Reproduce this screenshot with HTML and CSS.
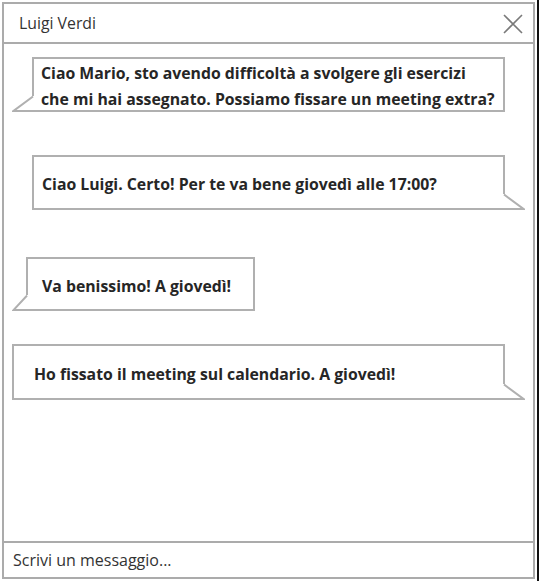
FILE: index.html
```html
<!DOCTYPE html>
<html lang="it">
<head>
<meta charset="utf-8">
<title>Chat - Luigi Verdi</title>
<link rel="stylesheet" href="styles.css">
</head>
<body>
<div class="app">
  <header class="header">
    <span class="title">Luigi Verdi</span>
    <svg class="close" width="20" height="20" viewBox="0 0 20 20" aria-label="Chiudi">
      <path d="M1 1 L19 19 M19 1 L1 19" stroke="#7a7a7a" stroke-width="1.6" fill="none"/>
    </svg>
  </header>
  <main class="chat">
    <div class="bubble b1">
      <p>Ciao Mario, sto avendo difficoltà a svolgere gli esercizi<br>che mi hai assegnato. Possiamo fissare un meeting extra?</p>
      <svg class="tail tail-left" width="22" height="16" viewBox="0 0 22 16"><polygon points="19,0 22,0 22,16 0,16" fill="#fff"/><polyline points="21,0.5 1.5,15 22,15" fill="none" stroke="#b0b0b0" stroke-width="2"/></svg>
    </div>
    <div class="bubble b2">
      <p>Ciao Luigi. Certo! Per te va bene giovedì alle 17:00?</p>
      <svg class="tail tail-right" width="22" height="16" viewBox="0 0 22 16"><polygon points="3,0 0,0 0,16 22,16" fill="#fff"/><polyline points="1,0.5 20.5,15 0,15" fill="none" stroke="#b0b0b0" stroke-width="2"/></svg>
    </div>
    <div class="bubble b3">
      <p>Va benissimo! A giovedì!</p>
      <svg class="tail tail-left tail-sm" width="16" height="16" viewBox="0 0 16 16"><polygon points="13,0 16,0 16,16 0,16" fill="#fff"/><polyline points="15,0.5 1.5,15 16,15" fill="none" stroke="#b0b0b0" stroke-width="2"/></svg>
    </div>
    <div class="bubble b4">
      <p>Ho fissato il meeting sul calendario. A giovedì!</p>
      <svg class="tail tail-right" width="22" height="16" viewBox="0 0 22 16"><polygon points="3,0 0,0 0,16 22,16" fill="#fff"/><polyline points="1,0.5 20.5,15 0,15" fill="none" stroke="#b0b0b0" stroke-width="2"/></svg>
    </div>
  </main>
  <footer class="composer">
    <span class="placeholder">Scrivi un messaggio...</span>
  </footer>
</div>
</body>
</html>
```

FILE: styles.css
```css
* { box-sizing: border-box; }
html { background: #fff; }
body {
  margin: 0;
  width: 539px;
  height: 581px;
  border-right: 2px solid #111;
  background: #fff;
  padding: 2px 0 0 2px;
  font-family: "Open Sans", "Noto Sans", sans-serif;
  color: #2b2b2b;
}
.app {
  width: 533px;
  height: 577px;
  border: 2px solid #ababab;
  display: flex;
  flex-direction: column;
}
.header {
  height: 40px;
  border-bottom: 2px solid #ababab;
  display: flex;
  align-items: center;
  justify-content: space-between;
  padding: 0 10px 0 15px;
  flex: none;
}
.title {
  font-size: 15.8px;
  color: #333;
}
.close { display: block; margin-top: 1px; }
.chat {
  flex: 1;
  display: flex;
  flex-direction: column;
  align-items: flex-start;
  padding-top: 13px;
}
.bubble {
  position: relative;
  height: 55px;
  border: 2px solid #b0b0b0;
  background: #fff;
  display: flex;
  align-items: center;
  font-size: 15.8px;
  font-weight: 700;
  color: #262626;
}
.bubble p { margin: 0; line-height: 26px; padding-top: 3px; white-space: nowrap; }
.b1 { margin-left: 28px; width: 473px; padding-left: 7px; }
.b2 { margin-left: 28px; width: 473px; padding-left: 8px; margin-top: 43px; }
.b3 { margin-left: 22px; width: 229px; padding-left: 14px; margin-top: 47px; height: 54px; }
.b4 { margin-left: 8px; width: 493px; padding-left: 20px; margin-top: 33px; height: 56px; }
.tail { position: absolute; bottom: -2px; display: block; }
.tail-left { left: -22px; }
.tail-right { right: -22px; }
.tail-left.tail-sm { left: -16px; }
.composer {
  height: 36px;
  border-top: 2px solid #ababab;
  display: flex;
  align-items: center;
  padding-left: 9px;
  flex: none;
}
.placeholder { font-size: 16px; color: #333; }
```
